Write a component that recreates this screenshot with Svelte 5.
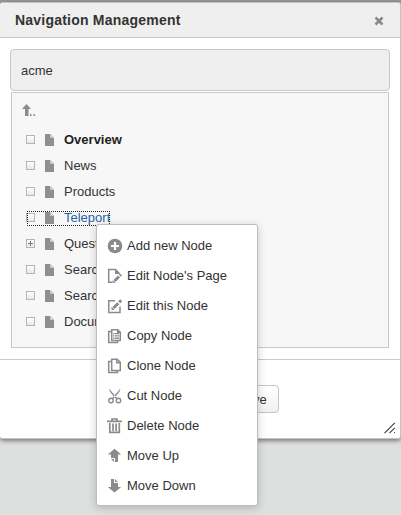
<script>
  const nodes = [
    { label: 'Overview', bold: true },
    { label: 'News' },
    { label: 'Products' },
    { label: 'Teleport', selected: true },
    { label: 'Questions', plus: true },
    { label: 'Search' },
    { label: 'Search' },
    { label: 'Documents' }
  ];
  const actions = [
    ['add', 'Add new Node'],
    ['page', "Edit Node's Page"],
    ['edit', 'Edit this Node'],
    ['copy', 'Copy Node'],
    ['clone', 'Clone Node'],
    ['cut', 'Cut Node'],
    ['trash', 'Delete Node'],
    ['up', 'Move Up'],
    ['down', 'Move Down']
  ];
</script>

<div class="screen">
  <section class="dialog">
    <header>
      <h1>Navigation Management</h1>
      <svg class="close" width="10" height="10" viewBox="0 0 10 10"><path d="M1.500 1.500 8.500 8.500M8.500 1.500 1.500 8.500" stroke="#888" stroke-width="2.500" /></svg>
    </header>
    <div class="content">
      <div class="site">acme</div>
      <div class="tree">
        <div class="parent">
          <svg width="14" height="13" viewBox="0 0 14 13"><path d="M0 5 4.500 0 9 5H6.500v7H3V5zM8 10h1.500v2H8zM11.500 10H13v2h-1.500z" fill="#8c8c8c" /></svg>
        </div>
        {#each nodes as n}
          <div class="row">
            <div class="node" class:selected={n.selected}>
              <span class="box">
                {#if n.plus}<svg width="7" height="7" viewBox="0 0 7 7"><path d="M1 3.500h5M3.500 1v5" stroke="#777" /></svg>{/if}
              </span>
              <svg class="file" width="9" height="12" viewBox="0 0 9 12"><path d="M0 0h5v4h4v8H0z" fill="#8f8f8f" /><path d="M5.500.5 8.500 3.500h-3z" fill="#ddd" stroke="#aaa" stroke-width=".6" /></svg>
              <span class="label" class:bold={n.bold}>{n.label}</span>
            </div>
          </div>
        {/each}
      </div>
    </div>
    <footer>
      <button>Save</button>
      <svg class="grip" width="12" height="12" viewBox="0 0 12 12"><path d="M.5 11.200 10.800.8M5.500 11.200l5.300-5.400" stroke="#444" stroke-width="1.200" /><path d="M10 10h1v1h-1z" fill="#555" /></svg>
    </footer>
  </section>

  <ul class="menu">
    {#each actions as [icon, label]}
      <li>
        <svg width="16" height="16" viewBox="0 0 16 16" fill="#8b8b8b" stroke="none">
          {#if icon === 'add'}
            <circle cx="8" cy="8" r="7.300" /><path d="M8 4v8M4 8h8" stroke="#fff" stroke-width="2.200" />
          {:else if icon === 'page'}
            <path d="M12 5.500V5L8.500 1.500H1.700v12.800H5" fill="none" stroke="#8b8b8b" stroke-width="1.500" /><path d="M8 1v5h5z" /><path d="M7.500 13 12 8.500M12.800 7.700 14 6.500" stroke="#8b8b8b" stroke-width="3" /><path d="M5.500 12v3h3z" />
          {:else if icon === 'edit'}
            <path d="M8 2.800H1.800v11.700H13V8.500" fill="none" stroke="#8b8b8b" stroke-width="1.500" /><path d="M6.500 10 11.300 5.200M12.200 4.300 14.200 2.300" stroke="#8b8b8b" stroke-width="3" /><path d="M4.500 8.800V12h3.200z" />
          {:else if icon === 'copy'}
            <path d="M4 3.500H1.700v11h8.800V13" fill="none" stroke="#8b8b8b" stroke-width="1.500" /><path d="M4.700 1.700h6l2.600 2.600v8.200H4.700z" fill="#fff" stroke="#8b8b8b" stroke-width="1.500" /><path d="M10 1v4h4zM6 5h1.500v1.300H6zM8 5h4v1.300H8zM6 7.300h1.500v1.300H6zM8 7.300h4v1.300H8zM6 9.600h1.500v1.300H6zM8 9.600h4v1.300H8z" />
          {:else if icon === 'clone'}
            <path d="M4 3.500H1.700v11h8.800V13" fill="none" stroke="#8b8b8b" stroke-width="1.500" /><path d="M4.700 1.300h5.500l3.100 3.100v8.100H4.700z" fill="#fff" stroke="#8b8b8b" stroke-width="1.500" /><path d="M9 1v4.500h4.500L12.500 4h-2V1z" />
          {:else if icon === 'cut'}
            <path d="M2.200.7c0 2 1 3.500 5.300 8.500l2.300 2.300 1-1.200C8 7.500 5 4 2.200.7zM13.300.7c0 2-1 3.500-5.300 8.500l-2.300 2.300-1-1.200C7.500 7.500 10.500 4 13.300.7z" /><g fill="none" stroke="#8b8b8b" stroke-width="1.400"><circle cx="4" cy="12.500" r="2.200" /><circle cx="11.500" cy="12.500" r="2.200" /></g>
          {:else if icon === 'trash'}
            <path d="M0 3.300h15M5 3V1h5v2M2.800 5v9.300h9.500V5M6 5.500V13M9.100 5.500V13" fill="none" stroke="#8b8b8b" stroke-width="1.700" />
          {:else if icon === 'up'}
            <path d="M.8 6.500 7.500.8 14.200 6.500H11v7.500H8v-4H4V6.500zM4 11h3v3z" />
          {:else}
            <path d="M4 1h3v4h4v4h3.200l-6.700 5.500L.8 9H4zM8 1l3 3H8z" />
          {/if}
        </svg>
        <span>{label}</span>
      </li>
    {/each}
  </ul>
</div>

<style>
  .screen {
    position: relative;
    box-sizing: border-box;
    width: 401px;
    height: 515px;
    padding-top: 2px;
    overflow: hidden;
    background: linear-gradient(#969696 0, #969696 10px, #dde0df 10px);
    font: 13px/18px "Liberation Sans", Arial, sans-serif;
    color: #333;
  }
  .dialog {
    box-sizing: border-box;
    height: 437px;
    display: flex;
    flex-direction: column;
    background: #fff;
    border: 1px solid #c4c4c4;
    border-left: 0;
    border-radius: 3px;
    box-shadow: 0 2px 4px rgba(0, 0, 0, .45);
  }
  header {
    box-sizing: border-box;
    height: 35px;
    display: flex;
    align-items: center;
    justify-content: space-between;
    padding: 0 16px 0 15px;
    background: #efefef;
    border-bottom: 1px solid #c8c8c8;
    border-radius: 3px 3px 0 0;
  }
  h1 { margin: 0; font-size: 14px; letter-spacing: .22px; line-height: 20px; color: #333; }
  .close { margin-top: 2px; }
  .content { height: 321px; box-sizing: border-box; padding: 11px 10px 0; }
  .site {
    box-sizing: border-box;
    height: 42px;
    padding: 12px 10px 10px;
    background: #efefef;
    border: 1px solid #c8c8c8;
    border-radius: 4px;
  }
  .tree {
    box-sizing: border-box;
    height: 256px;
    margin: 1px 1px 0;
    padding: 11px 14px;
    border: 1px solid #c8c8c8;
    background: #f7f7f7;
  }
  .parent { height: 23px; margin-left: -4px; }
  .parent svg, .row svg { display: block; }
  .row { height: 26px; display: flex; align-items: center; }
  .node { box-sizing: border-box; height: 15px; display: flex; align-items: center; }
  .selected { outline: 1px dotted #222; outline-offset: -1px; margin: 0 -1px 0 1px; }
  .selected .box { margin-left: -1px; }
  .box {
    box-sizing: border-box;
    width: 9px;
    height: 9px;
    margin-bottom: 2px;
    border: 1px solid #b5b5b5;
    background: linear-gradient(#fff, #e8e8e8);
  }
  .file { margin: 0 10px; }
  .label { white-space: nowrap; }
  .bold { font-weight: bold; color: #222; }
  .selected .label { color: #2562a5; }
  footer {
    flex: 1;
    display: flex;
    justify-content: flex-end;
    border-top: 1px solid #c8c8c8;
  }
  button {
    box-sizing: border-box;
    width: 52px;
    height: 28px;
    margin: 25px 105px 0 0;
    padding: 2px 2px 0 0;
    color: #333;
    font: inherit;
    border: 1px solid #c5c5c5;
    border-radius: 4px;
    background: linear-gradient(#fff, #f0f0f0);
  }
  .grip { margin: 62px 4px 0 0; }
  .menu {
    position: absolute;
    left: 96px;
    top: 224px;
    box-sizing: border-box;
    width: 162px;
    height: 282px;
    margin: 0;
    padding: 6px 10px 4px;
    list-style: none;
    background: #fff;
    border: 1px solid #bdbdbd;
    border-radius: 3px;
    box-shadow: 0 2px 9px rgba(0, 0, 0, .2);
  }
  li { height: 30px; display: flex; align-items: center; gap: 4px; white-space: nowrap; }
  li svg { margin-bottom: 1px; }
</style>
